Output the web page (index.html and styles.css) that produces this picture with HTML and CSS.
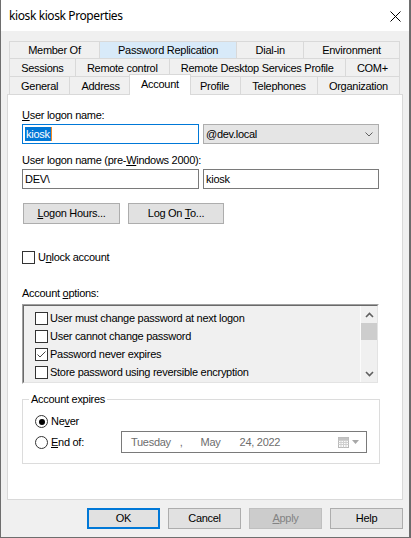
FILE: index.html
```html
<!DOCTYPE html>
<html lang="en">
<head>
<meta charset="utf-8">
<title>kiosk kiosk Properties</title>
<link rel="stylesheet" href="styles.css">
</head>
<body>
<div class="window">
  <div class="titlebar">
    <span class="title">kiosk kiosk Properties</span>
    <svg class="close" width="11" height="11" viewBox="0 0 11 11" aria-hidden="true">
      <path d="M0.5 0.5 L10.5 10.5 M10.5 0.5 L0.5 10.5" stroke="#000" stroke-width="1" fill="none"/>
    </svg>
  </div>

  <div class="tabs">
    <div class="tab-row first">
      <div class="tab">Member Of</div>
      <div class="tab hot">Password Replication</div>
      <div class="tab">Dial-in</div>
      <div class="tab">Environment</div>
    </div>
    <div class="tab-row">
      <div class="tab">Sessions</div>
      <div class="tab">Remote control</div>
      <div class="tab">Remote Desktop Services Profile</div>
      <div class="tab">COM+</div>
    </div>
    <div class="tab-row">
      <div class="tab">General</div>
      <div class="tab">Address</div>
      <div class="tab active">Account</div>
      <div class="tab">Profile</div>
      <div class="tab">Telephones</div>
      <div class="tab">Organization</div>
    </div>
  </div>

  <div class="panel">
    <div class="label"><u>U</u>ser logon name:</div>
    <div class="field-row">
      <div class="edit w1 focus"><span class="sel">kiosk</span><span class="caret"></span></div>
      <div class="combo w2">
        <span>@dev.local</span>
        <svg class="chev" width="8" height="5" viewBox="0 0 8 5" aria-hidden="true">
          <path d="M0.5 0.5 L4 4 L7.5 0.5" stroke="#606060" stroke-width="1" fill="none"/>
        </svg>
      </div>
    </div>

    <div class="label gap10">User logon name (pre-<u>W</u>indows 2000):</div>
    <div class="field-row">
      <div class="edit w1">DEV\</div>
      <div class="edit w2">kiosk</div>
    </div>

    <div class="btn-row">
      <div class="btn b1"><span><u>L</u>ogon Hours...</span></div>
      <div class="btn b2"><span>Log On <u>T</u>o...</span></div>
    </div>

    <div class="check-row unlock">
      <span class="cb"></span>
      <span>U<u>n</u>lock account</span>
    </div>

    <div class="label gap23">Account <u>o</u>ptions:</div>
    <div class="listbox">
      <div class="list-inner">
        <div class="items">
          <div class="item"><span class="cb"></span><span>User must change password at next logon</span></div>
          <div class="item"><span class="cb"></span><span>User cannot change password</span></div>
          <div class="item"><span class="cb checked">
            <svg width="11" height="11" viewBox="0 0 11 11" aria-hidden="true">
              <path d="M1.5 5.5 L4 8 L9.5 2.5" stroke="#444" stroke-width="1" fill="none"/>
            </svg></span><span>Password never expires</span></div>
          <div class="item"><span class="cb"></span><span>Store password using reversible encryption</span></div>
        </div>
        <div class="scrollbar">
          <div class="sb-btn">
            <svg width="9" height="6" viewBox="0 0 9 6" aria-hidden="true">
              <path d="M1 5 L4.5 1.5 L8 5" stroke="#606060" stroke-width="1.6" fill="none"/>
            </svg>
          </div>
          <div class="sb-thumb"></div>
          <div class="sb-track"></div>
          <div class="sb-btn">
            <svg width="9" height="6" viewBox="0 0 9 6" aria-hidden="true">
              <path d="M1 1 L4.5 4.5 L8 1" stroke="#606060" stroke-width="1.6" fill="none"/>
            </svg>
          </div>
        </div>
      </div>
    </div>

    <fieldset class="group">
      <legend>Account expires</legend>
      <div class="radio-row">
        <span class="radio on"></span>
        <span>Ne<u>v</u>er</span>
      </div>
      <div class="end-row">
        <div class="radio-row">
          <span class="radio"></span>
          <span><u>E</u>nd of:</span>
        </div>
        <div class="date">
          <span>Tuesday</span>
          <span class="d-comma">,</span>
          <span class="d-month">May</span>
          <span class="d-day">24, 2022</span>
          <span class="d-icons">
            <svg width="11" height="11" viewBox="0 0 11 11" aria-hidden="true">
              <rect x="0.5" y="0.5" width="10" height="10" fill="#fbfbfb" stroke="#b8b8b8"/>
              <path d="M0.5 3.5 H10.5 M0.5 5.5 H10.5 M0.5 7.5 H10.5 M3 3.5 V10.5 M5.5 3.5 V10.5 M8 3.5 V10.5" stroke="#cfcfcf" stroke-width="1"/>
              <rect x="0.5" y="0.5" width="10" height="2.5" fill="#c4c4c4"/>
            </svg>
            <svg width="7" height="4" viewBox="0 0 7 4" aria-hidden="true">
              <path d="M0 0 H7 L3.5 4 Z" fill="#a8a8a8"/>
            </svg>
          </span>
        </div>
      </div>
    </fieldset>
  </div>

  <div class="footer">
    <div class="btn dlg default"><span>OK</span></div>
    <div class="btn dlg"><span>Cancel</span></div>
    <div class="btn dlg disabled"><span><u>A</u>pply</span></div>
    <div class="btn dlg"><span>Help</span></div>
  </div>
</div>
</body>
</html>
```

FILE: styles.css
```css
* {
  box-sizing: border-box;
}

html,
body {
  margin: 0;
}

body {
  background: #6b6b6b;
  color: #000;
  font: 11px/13px "Liberation Sans", Arial, sans-serif;
  letter-spacing: -0.28px;
}

u {
  text-decoration: underline;
  text-underline-offset: 1px;
}

/* dialog frame */
.window {
  width: 410px;
  height: 538px;
  display: flex;
  flex-direction: column;
  background: #f0f0f0;
  border: 1px solid #6e6e6e;
  border-top: 0;
}

.titlebar {
  flex: none;
  height: 31px;
  display: flex;
  align-items: center;
  justify-content: space-between;
  padding: 0 8px 0 8px;
  background: #fff;
}

.title {
  font: 12px/16px "Noto Sans", sans-serif;
  letter-spacing: -0.4px;
}

.close {
  display: block;
  margin-top: 1px;
}

/* tab strip: three rows, selected row at the bottom */
.tabs {
  flex: none;
  width: 391px;
  margin: 10px 0 0 8px;
}

.tab-row {
  display: flex;
  height: 18px;
}

.tab-row.first {
  height: 17px;
}

.tab {
  flex: 1 1 auto;
  margin-left: -1px;
  padding: 3px 4px 0;
  text-align: center;
  white-space: nowrap;
  background: #f0f0f0;
  border: 1px solid #d9d9d9;
  border-bottom: 0;
}

.tab:first-child {
  margin-left: 0;
}

.first .tab {
  padding-top: 2px;
}

.tab.hot {
  background: #d8eaf9;
}

.tab.active {
  position: relative;
  z-index: 1;
  margin: -2px -2px -1px -3px;
  background: #fff;
}

/* page of the Account tab */
.panel {
  flex: none;
  width: 396px;
  height: 406px;
  margin-left: 6px;
  padding: 14px 0 0 14px;
  background: #fff;
  border: 1px solid #d9d9d9;
}

.label {
  height: 13px;
  white-space: nowrap;
}

.gap10 {
  margin-top: 10px;
}

.gap23 {
  margin-top: 23px;
}

.field-row {
  display: flex;
  gap: 4px;
  margin-top: 2px;
}

.w1 {
  width: 177px;
}

.w2 {
  width: 176px;
}

.edit {
  height: 20px;
  padding: 2px 0 0 2px;
  line-height: 14px;
  background: #fff;
  border: 1px solid #7a7a7a;
  white-space: nowrap;
}

.edit.focus {
  border-color: #0078d7;
  display: flex;
  align-items: flex-start;
}

.sel {
  padding: 0 1px;
  color: #fff;
  background: #0078d7;
}

.caret {
  width: 1px;
  height: 14px;
  background: #f08a24;
}

.combo {
  height: 20px;
  display: flex;
  align-items: center;
  justify-content: space-between;
  padding: 0 5px 0 2px;
  background: #e5e5e5;
  border: 1px solid #adadad;
}

.chev {
  display: block;
}

.btn {
  height: 21px;
  display: flex;
  align-items: center;
  justify-content: center;
  white-space: nowrap;
  background: #e1e1e1;
  border: 1px solid #adadad;
}

.btn-row {
  display: flex;
  gap: 8px;
  margin: 14px 0 0 1px;
}

.b1 {
  width: 97px;
}

.b2 {
  width: 96px;
}

.check-row {
  display: flex;
  align-items: center;
  gap: 3px;
  height: 13px;
}

.unlock {
  margin-top: 27px;
}

.cb {
  flex: none;
  width: 13px;
  height: 13px;
  display: block;
  background: #fff;
  border: 1px solid #333;
}

.cb svg {
  display: block;
}

/* checked list box */
.listbox {
  width: 357px;
  height: 80px;
  margin-top: 4px;
  border: 1px solid;
  border-color: #a0a0a0 #fff #fff #a0a0a0;
}

.list-inner {
  height: 100%;
  display: flex;
  background: #f0f0f0;
  border: 1px solid;
  border-color: #696969 #e3e3e3 #e3e3e3 #696969;
}

.items {
  flex: 1;
  padding: 3px 0 0 11px;
}

.item {
  height: 18px;
  display: flex;
  align-items: center;
  gap: 2px;
  white-space: nowrap;
}

.scrollbar {
  flex: none;
  width: 17px;
  display: flex;
  flex-direction: column;
  background: #f0f0f0;
  border-left: 1px solid #fbfbfb;
}

.sb-btn {
  height: 17px;
  display: flex;
  align-items: center;
  justify-content: center;
}

.sb-btn svg {
  display: block;
}

.sb-thumb {
  height: 17px;
  background: #cdcdcd;
}

.sb-track {
  flex: 1;
}

/* Account expires group */
.group {
  width: 358px;
  margin: 9px 0 0;
  padding: 9px 0 10px 12px;
  border: 1px solid #dcdcdc;
}

.group legend {
  margin-left: -6px;
  padding: 0 2px;
  line-height: 13px;
}

.radio-row {
  display: flex;
  align-items: center;
  gap: 3px;
  height: 13px;
}

.radio {
  position: relative;
  flex: none;
  width: 13px;
  height: 13px;
  border: 1px solid #333;
  border-radius: 50%;
  background: #fff;
}

.radio.on::after {
  content: "";
  position: absolute;
  top: 2.5px;
  left: 2.5px;
  width: 6px;
  height: 6px;
  border-radius: 50%;
  background: #000;
}

.end-row {
  display: grid;
  grid-template-columns: 86px 246px;
  align-items: center;
  margin-top: 3px;
}

.date {
  height: 22px;
  display: flex;
  align-items: center;
  padding: 0 7px 0 9px;
  color: #6d6d6d;
  background: #fff;
  border: 1px solid #7a7a7a;
  white-space: nowrap;
}

.d-comma {
  margin-left: 9px;
}

.d-month {
  margin-left: 18px;
}

.d-day {
  margin-left: 19px;
}

.d-icons {
  margin-left: auto;
  display: flex;
  align-items: center;
  gap: 3px;
}

.d-icons svg {
  display: block;
}

/* dialog buttons */
.footer {
  flex: none;
  display: flex;
  justify-content: flex-end;
  gap: 8px;
  margin-top: 8px;
  padding-right: 6px;
}

.dlg {
  width: 73px;
}

.dlg.default {
  border-color: #0078d7;
  box-shadow: inset 0 0 0 1px #0078d7;
}

.dlg.disabled {
  color: #838383;
  background: #cccccc;
  border-color: #bfbfbf;
}
```
